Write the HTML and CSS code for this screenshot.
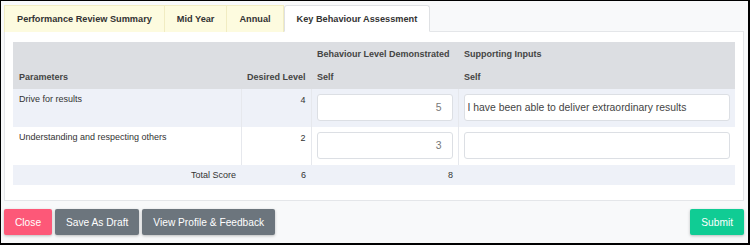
FILE: index.html
```html
<!DOCTYPE html>
<html lang="en">
<head>
    <meta charset="UTF-8">
    <meta name="viewport" content="width=device-width, initial-scale=1.0">
    <title>Key Behaviour Assessment</title>
    <link rel="stylesheet" href="styles.css">
</head>
<body>
    <div class="frame">
        <div class="tabs">
            <div class="tab">Performance Review Summary</div>
            <div class="tab">Mid Year</div>
            <div class="tab">Annual</div>
            <div class="tab active">Key Behaviour Assessment</div>
        </div>

        <div class="panel">
            <table class="kba">
                <colgroup>
                    <col class="c-param">
                    <col class="c-level">
                    <col class="c-self">
                    <col class="c-input">
                </colgroup>
                <thead>
                    <tr class="head-top">
                        <th></th>
                        <th></th>
                        <th>Behaviour Level Demonstrated</th>
                        <th>Supporting Inputs</th>
                    </tr>
                    <tr class="head-bottom">
                        <th>Parameters</th>
                        <th class="num">Desired Level</th>
                        <th>Self</th>
                        <th>Self</th>
                    </tr>
                </thead>
                <tbody>
                    <tr class="shade">
                        <td>Drive for results</td>
                        <td class="num">4</td>
                        <td class="cell-input"><input type="text" class="field num-field" value="5"></td>
                        <td class="cell-input"><input type="text" class="field" value="I have been able to deliver extraordinary results"></td>
                    </tr>
                    <tr>
                        <td>Understanding and respecting others</td>
                        <td class="num">2</td>
                        <td class="cell-input"><input type="text" class="field num-field" value="3"></td>
                        <td class="cell-input"><input type="text" class="field" value=""></td>
                    </tr>
                    <tr class="shade total">
                        <td class="num">Total Score</td>
                        <td class="num">6</td>
                        <td class="num">8</td>
                        <td></td>
                    </tr>
                </tbody>
            </table>
        </div>

        <div class="actions">
            <div class="left-actions">
                <button class="btn btn-close">Close</button>
                <button class="btn btn-gray">Save As Draft</button>
                <button class="btn btn-gray">View Profile &amp; Feedback</button>
            </div>
            <button class="btn btn-submit">Submit</button>
        </div>
    </div>
</body>
</html>
```

FILE: styles.css
```css
body {
    margin: 0;
    font-family: "Liberation Sans", Arial, sans-serif;
    color: #333;
}

.frame {
    width: 750px;
    height: 245px;
    box-sizing: border-box;
    border-style: solid;
    border-color: #000;
    border-width: 1px 2px 2px 1px;
    background: #f8f9fa;
    padding: 4px 4px 0 3px;
}

.tabs {
    display: flex;
    height: 27px;
    margin-bottom: -1px;
    position: relative;
}

.tab {
    background: #fdfbdf;
    border: 1px solid #f1ecc2;
    border-bottom: none;
    border-left: none;
    font-size: 9.2px;
    font-weight: bold;
    color: #333;
    padding: 0 12px;
    display: flex;
    align-items: center;
}

.tab:first-child {
    border-left: 1px solid #f1ecc2;
}

.tab.active {
    background: #fff;
    border: 1px solid #dfe1e4;
    border-bottom: 1px solid #fff;
    border-radius: 3px 3px 0 0;
    padding: 0 12px;
}

.panel {
    background: #fff;
    border: 1px solid #e4e6e9;
    height: 170px;
    box-sizing: border-box;
    padding: 10px 7px 0 8px;
}

.kba {
    width: 722px;
    border-collapse: collapse;
    table-layout: fixed;
    font-size: 9px;
}

.c-param { width: 228px; }
.c-level { width: 70px; }
.c-self { width: 147px; }
.c-input { width: 277px; }

.kba th {
    background: #dcdee2;
    font-weight: bold;
    color: #444;
    text-align: left;
    padding: 0 6px;
    white-space: nowrap;
}

.head-top th {
    height: 23px;
    vertical-align: middle;
}

.head-bottom th {
    height: 24px;
    vertical-align: middle;
}

.kba td {
    padding: 5px 5px 5px 6px;
    vertical-align: top;
    border-left: 1px solid #e6e8ed;
}

.kba td.cell-input {
    padding: 5px;
}

.kba td:first-child {
    border-left: none;
}

.kba tbody tr {
    height: 38px;
}

.kba tr.shade td {
    background: #eef1f8;
}

.kba tr.total {
    height: 20px;
}

.kba tr.total td {
    padding: 5px 5px 0 6px;
    border-left: none;
}

.kba .num {
    text-align: right;
}

.kba td.num {
    padding-top: 6px;
}

.field {
    display: block;
    width: 100%;
    height: 27px;
    box-sizing: border-box;
    border: 1px solid #dcdfe4;
    border-radius: 3px;
    background: #fff;
    font-family: "Liberation Sans", Arial, sans-serif;
    font-size: 10.4px;
    color: #444;
    padding: 0 3px;
}

.field.num-field {
    text-align: right;
    color: #777;
    padding-right: 10px;
}

.actions {
    display: flex;
    justify-content: space-between;
    align-items: center;
    margin-top: 8px;
}

.left-actions {
    display: flex;
    gap: 3px;
}

.btn {
    height: 26px;
    border: none;
    border-radius: 2px;
    padding: 0 11px;
    font-family: "Liberation Sans", Arial, sans-serif;
    font-size: 10.2px;
    color: #fff;
    box-shadow: 0 1px 3px rgba(0, 0, 0, 0.25);
}

.btn-close {
    background: #fd5878;
}

.btn-gray {
    background: #6c757d;
}

.btn-submit {
    background: #10cc94;
}
```
